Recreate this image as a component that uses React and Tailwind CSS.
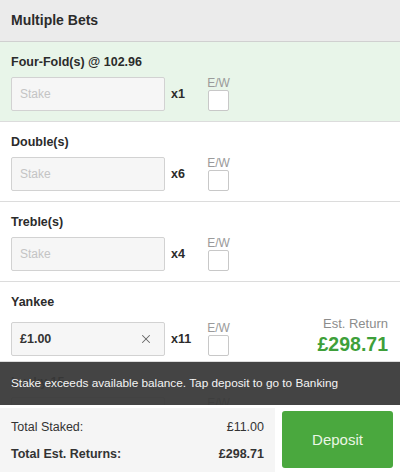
import { X } from "lucide-react";

const bets = [
  { name: "Four-Fold(s) @ 102.96", count: "x1", active: true },
  { name: "Double(s)", count: "x6" },
  { name: "Treble(s)", count: "x4" },
  { name: "Yankee", count: "x11", stake: "£1.00", ret: "£298.71" },
  { name: "Lucky 15", count: "x15" },
];

const BetRow = ({ bet }) => (
  <div
    className={`h-[80px] shrink-0 border-b border-[#dcdcdc] px-[11px] pt-[12px] ${
      bet.active ? "bg-[#e8f5e9]" : "bg-white"
    }`}
  >
    <div className="text-[12.5px] leading-[16px] font-bold text-[#2b2b2b]">{bet.name}</div>
    <div className="mt-[6px] flex items-end">
      <div className="flex h-[34px] w-[154px] items-center rounded-[2px] border border-[#d2d2d2] bg-[#f6f6f6] px-[8px]">
        {bet.stake ? (
          <>
            <span className="flex-1 text-[12.5px] font-bold text-[#333]">{bet.stake}</span>
            <X size={14} strokeWidth={1.8} className="mr-[3px] text-[#666]" />
          </>
        ) : (
          <span className="text-[12px] text-[#c4c4c4]">Stake</span>
        )}
      </div>
      <div className="flex h-[34px] w-[42px] items-center pl-[6px] text-[12.5px] font-bold text-[#2b2b2b]">
        {bet.count}
      </div>
      <div className="flex w-[23px] flex-col items-center">
        <span className="text-[12px] leading-[14px] text-[#9a9a9a]">E/W</span>
        <div className="h-[21px] w-[21px] rounded-[2px] border border-[#c8c8c8] bg-white" />
      </div>
      {bet.ret && (
        <div className="flex flex-1 flex-col items-end pr-[1px]">
          <span className="text-[13px] leading-[16px] text-[#8c8c8c]">Est. Return</span>
          <span className="text-[19.5px] leading-[24px] font-bold text-[#3e9f3a]">{bet.ret}</span>
        </div>
      )}
    </div>
  </div>
);

export default function App() {
  return (
    <div
      className="flex h-[472px] w-[400px] flex-col overflow-hidden bg-white"
      style={{ fontFamily: '"Liberation Sans", Arial, sans-serif' }}
    >
      <div className="flex h-[42px] shrink-0 items-center border-b border-[#d0d0d0] bg-[#ebebeb] px-[11px]">
        <span className="text-[14px] font-bold text-[#2b2b2b]">Multiple Bets</span>
      </div>

      <div className="relative flex flex-1 flex-col overflow-hidden">
        {bets.map((bet) => (
          <BetRow key={bet.name} bet={bet} />
        ))}
        <div className="absolute inset-x-0 bottom-0 flex h-[43px] items-center bg-[#383838]/[0.94] px-[11px]">
          <span className="text-[11.8px] text-[#f4f4f4]">
            Stake exceeds available balance. Tap deposit to go to Banking
          </span>
        </div>
      </div>

      <div className="flex h-[67px] shrink-0 bg-white pt-[3px]">
        <div className="flex w-[275px] flex-col justify-center gap-[8px] bg-[#f5f5f5] px-[11px] pt-[2px] text-[12.5px] text-[#333]">
          <div className="flex justify-between">
            <span>Total Staked:</span>
            <span>£11.00</span>
          </div>
          <div className="flex justify-between font-bold">
            <span>Total Est. Returns:</span>
            <span>£298.71</span>
          </div>
        </div>
        <div className="flex flex-1 px-[7px] pt-[3px] pb-[4px]">
          <button className="flex flex-1 items-center justify-center rounded-[3px] bg-[#4aa83e] pt-[2px] text-[15px] text-[#eaf6e4]">
            Deposit
          </button>
        </div>
      </div>
    </div>
  );
}
